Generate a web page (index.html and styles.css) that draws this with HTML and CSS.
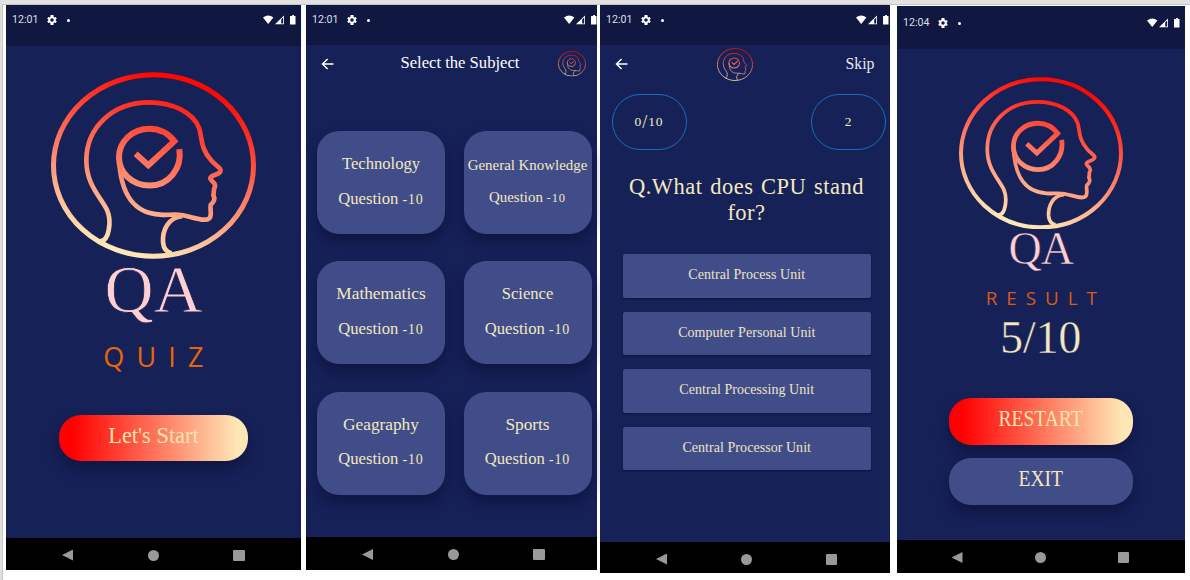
FILE: index.html
```html
<!DOCTYPE html>
<html lang="en">
<head>
<meta charset="utf-8">
<title>QA Quiz</title>
<link rel="stylesheet" href="styles.css">
</head>
<body>
<svg class="defs" aria-hidden="true">
  <defs>
    <linearGradient id="warm" gradientUnits="userSpaceOnUse" x1="430" y1="70" x2="270" y2="590">
      <stop offset="0" stop-color="#ff0800"/>
      <stop offset=".5" stop-color="#ff7861"/>
      <stop offset="1" stop-color="#ffedba"/>
    </linearGradient>
    <symbol id="logo" viewBox="34 35 615 560" preserveAspectRatio="none">
      <g fill="none" stroke="url(#warm)" stroke-linejoin="round">
        <ellipse cx="341.500" cy="315" rx="300" ry="272" stroke-width="15"/>
        <path stroke-width="14" d="M180 541C208 545 217 482 202 448C182 408 140 372 140 300C140 200 220 126 328 126C400 126 460 157 478 202C489 234 480 260 515 300C530 317 547 324 542 333C536 344 510 344 512 354C514 364 529 366 526 378C520 388 524 396 521 403C528 417 522 424 513 433C510 448 519 464 508 474C495 484 460 470 430 464C400 459 384 465 362 462C286 458 242 408 238 290"/>
        <path stroke-width="14" d="M428 467C385 470 368 510 370 545Q373 574 396 578"/>
        <path stroke-width="18" stroke-linejoin="miter" d="M288 280L326 314L404 242C382 214 357 205 330 205C278 205 238 243 238 290C238 337 278 375 330 375C387 375 428 324 419 266"/>
      </g>
    </symbol>
    <symbol id="gear" viewBox="2 2 20 20"><path fill="#fff" d="M19.400 13a7.500 7.500 0 0 0 0-2l2.100-1.600-2-3.500-2.500 1a7.300 7.300 0 0 0-1.700-1L14.900 2H9.100l-.4 3.900a7.300 7.300 0 0 0-1.700 1l-2.500-1-2 3.500L4.600 11a7.500 7.500 0 0 0 0 2l-2.100 1.600 2 3.500 2.500-1a7.300 7.300 0 0 0 1.700 1l.4 3.900h5.800l.4-3.900a7.300 7.300 0 0 0 1.700-1l2.500 1 2-3.500zM12 15.500a3.500 3.500 0 1 1 0-7 3.500 3.500 0 0 1 0 7z"/></symbol>
    <symbol id="signals" viewBox="0 0 33 10">
      <path fill="#fff" d="M0 2.600Q5.200-1.600 10.400 2.600L5.200 9z"/>
      <path fill="#fff" fill-rule="evenodd" d="M12 9.300L21 .4V9.300zM18.200 4.600V8.500H20.200V2.500z"/>
      <path fill="#fff" d="M28.300 .9H29.200V0H31V.9H32.500V9.500H27V1.500Q27 .9 27.600 .9z"/>
    </symbol>
    <symbol id="back" viewBox="0 0 13 12"><path fill="none" stroke="#fff" stroke-width="1.500" d="M12.500 6H1.500M6.600 1L1.500 6L6.600 11"/></symbol>
  </defs>
</svg>
<div class="board">

  <section class="phone home">
    <div class="status"><span class="clock">12:01</span><svg class="gear"><use href="#gear"/></svg><i class="dot"></i><svg class="signals"><use href="#signals"/></svg></div>
    <main class="stack">
      <svg class="logo-large"><use href="#logo"/></svg>
      <div class="brand">QA</div>
      <div class="quiz">QUIZ</div>
      <div class="button warm"><span>Let's Start</span></div>
    </main>
    <nav class="nav"><i class="tri"></i><i class="circle"></i><i class="square"></i></nav>
  </section>

  <section class="phone subjects">
    <div class="status"><span class="clock">12:01</span><svg class="gear"><use href="#gear"/></svg><i class="dot"></i><svg class="signals"><use href="#signals"/></svg></div>
    <main>
      <header class="bar"><svg class="back"><use href="#back"/></svg><h1>Select the Subject</h1><svg class="logo-bar"><use href="#logo"/></svg></header>
      <div class="cards">
        <div class="card"><b>Technology</b><p>Question <span>-10</span></p></div>
        <div class="card small"><b>General Knowledge</b><p>Question <span>-10</span></p></div>
        <div class="card"><b class="wide">Mathematics</b><p>Question <span>-10</span></p></div>
        <div class="card"><b>Science</b><p>Question <span>-10</span></p></div>
        <div class="card"><b class="wide">Geagraphy</b><p>Question <span>-10</span></p></div>
        <div class="card"><b class="wide">Sports</b><p>Question <span>-10</span></p></div>
      </div>
    </main>
    <nav class="nav"><i class="tri"></i><i class="circle"></i><i class="square"></i></nav>
  </section>

  <section class="phone question">
    <div class="status"><span class="clock">12:01</span><svg class="gear"><use href="#gear"/></svg><i class="dot"></i><svg class="signals"><use href="#signals"/></svg></div>
    <main>
      <header class="bar"><svg class="back"><use href="#back"/></svg><svg class="logo-mid"><use href="#logo"/></svg><span class="skip">Skip</span></header>
      <div class="pills"><div class="pill">0<span>/</span>10</div><div class="pill">2</div></div>
      <h2>Q.What does CPU stand<br>for?</h2>
      <div class="options">
        <div class="option">Central Process Unit</div>
        <div class="option">Computer Personal Unit</div>
        <div class="option">Central Processing Unit</div>
        <div class="option">Central Processor Unit</div>
      </div>
    </main>
    <nav class="nav"><i class="tri"></i><i class="circle"></i><i class="square"></i></nav>
  </section>

  <section class="phone result">
    <div class="status"><span class="clock">12:04</span><svg class="gear"><use href="#gear"/></svg><i class="dot"></i><svg class="signals"><use href="#signals"/></svg></div>
    <main class="stack">
      <svg class="logo-large"><use href="#logo"/></svg>
      <div class="brand">QA</div>
      <div class="label">RESULT</div>
      <div class="score">5/10</div>
      <div class="button warm"><span>RESTART</span></div>
      <div class="button plain"><span>EXIT</span></div>
    </main>
    <nav class="nav"><i class="tri"></i><i class="circle"></i><i class="square"></i></nav>
  </section>

</div>
</body>
</html>
```
FILE: styles.css
```css
* { box-sizing: border-box; }
body {
  margin: 0;
  height: 580px;
  overflow: hidden;
  background: #fff;
  font-family: "Liberation Serif", serif;
  color: #f3e8bf;
}
svg { display: block; flex: none; }
h1, h2, p { margin: 0; font-weight: 400; }
.defs { position: absolute; width: 0; height: 0; }
.board {
  display: flex;
  align-items: flex-start;
  height: 580px;
  border-top: 4px solid #e2e2e2;
  border-left: 2px solid #dedede;
  box-shadow: inset 1px 1px #c6c6c6;
}

.phone {
  display: flex;
  flex-direction: column;
  flex: none;
  margin-top: 1px;
  background: #162158;
}
.home { width: 295px; height: 565px; margin-left: 4px; }
.subjects { width: 290.5px; height: 565px; margin-left: 5px; }
.question { width: 290px; height: 568px; margin-left: 3.5px; }
.result { width: 287.5px; height: 567px; margin: 2px 0 0 7px; }
.phone main { flex: 1; min-height: 0; }

.status {
  display: flex;
  align-items: center;
  flex: none;
  height: 41px;
  padding: 0 5px 11px 6px;
  background: #101841;
}
.subjects .status { height: 40px; padding-right: 0; padding-bottom: 10px; }
.question .status { height: 40px; padding-right: 1.500px; padding-bottom: 10px; }
.result .status { height: 43px; padding-bottom: 9px; }
.clock {
  width: 35px;
  font: 10.6px/14px Roboto, sans-serif;
  color: #dedfe6;
}
.gear { width: 10px; height: 10px; }
.dot { width: 3px; height: 3px; margin-left: 10px; border-radius: 50%; background: #fff; }
.signals { width: 33px; height: 10px; margin-left: auto; }

.nav {
  display: flex;
  align-items: center;
  gap: 74.5px;
  flex: none;
  height: 32px;
  padding: 2px 0 0 56px;
  background: #000;
}
.subjects .nav { height: 33px; }
.question .nav { height: 31px; padding-top: 3px; gap: 73.8px; }
.result .nav { height: 33px; padding-left: 54.5px; gap: 72px; }
.tri { width: 11px; height: 11px; background: #999; clip-path: polygon(0 50%, 100% 0, 100% 100%); }
.circle { width: 11px; height: 11px; border-radius: 50%; background: #999; }
.square { width: 11.5px; height: 11px; border-radius: 1px; background: #999; }

.stack { display: flex; flex-direction: column; align-items: center; }
.logo-large { width: 205px; height: 187px; margin-top: 25.5px; }
.result .logo-large { width: 164px; height: 152.5px; margin-top: 27.5px; }
.brand {
  font-size: 68px;
  line-height: 60px;
  color: #ffcfd2;
  -webkit-text-stroke: .8px #162158;
}
.result .brand {
  margin-top: -1px;
  font-size: 46px;
  line-height: 42px;
  letter-spacing: -1px;
  -webkit-text-stroke-width: .5px;
}
.quiz {
  margin-top: 23px;
  padding-left: 12px;
  font: 27px/30px "Open Sans", sans-serif;
  letter-spacing: 12.2px;
  color: #e8650a;
}
.label {
  margin-top: 15.500px;
  padding-left: 10px;
  font: 18.8px/24px "Open Sans", sans-serif;
  letter-spacing: 9px;
  color: #d85c14;
}
.score { margin-top: 3px; font-size: 45.5px; line-height: 50px; -webkit-text-stroke: .3px #162158; }

.button {
  display: flex;
  justify-content: center;
  width: 189px;
  height: 46px;
  margin-top: 43px;
  padding-bottom: 5px;
  border-radius: 22px;
  font-size: 22.4px;
  line-height: 41px;
  box-shadow: 0 8px 14px rgba(8, 12, 45, .5);
}
.warm { background: linear-gradient(90deg, #f00 7%, #fee6b5 94%); color: #ffe5ad; }
.plain { background: #414d89; }
.result .button { width: 184px; height: 46.5px; margin-top: 35.500px; font-size: 23.5px; }
.result .plain { height: 47.5px; margin-top: 13px; }
.result .button span { transform: scaleX(.83); }

.bar { display: flex; align-items: center; height: 38px; padding-left: 14.5px; }
.back { width: 13px; height: 12px; }
.bar h1 { margin-left: 67px; padding-bottom: 3px; font-size: 16.6px; color: #fff; white-space: nowrap; }
.logo-bar { width: 28px; height: 25.5px; margin-left: auto; margin-right: 11px; opacity: .95; }
.logo-mid { width: 36px; height: 33px; margin-left: 89px; margin-top: 1px; opacity: .9; }
.skip { margin-left: 93px; font-size: 15.8px; color: #e8e8f0; }

.cards {
  display: grid;
  grid-template-columns: 128px 128px;
  grid-auto-rows: 103px;
  gap: 27.4px 18.5px;
  padding: 48px 0 0 11px;
}
.card {
  padding-top: 16px;
  border-radius: 22px;
  background: #414d89;
  font-size: 16.6px;
  line-height: 34.7px;
  text-align: center;
  white-space: nowrap;
  box-shadow: 0 8px 13px rgba(8, 12, 45, .5);
}
.card b { display: block; font-weight: 400; }
.card .wide { font-size: 17.3px; }
.card p span { font-size: .84em; letter-spacing: .9px; }
.card.small { padding-top: 19.3px; font-size: 14.9px; line-height: 31.7px; }

.pills { display: flex; justify-content: space-between; padding: 11px 4px 0 11.5px; }
.pill {
  display: flex;
  align-items: center;
  justify-content: center;
  width: 75px;
  height: 56px;
  border: 1px solid #1b6cc0;
  border-radius: 29px;
  font-size: 13.5px;
  letter-spacing: .9px;
}
.pill span { font-size: 18px; }
.question h2 {
  margin-top: 24px;
  padding-left: 3px;
  font-size: 22.5px;
  line-height: 26px;
  letter-spacing: .5px;
  word-spacing: 1.5px;
  text-align: center;
  white-space: nowrap;
}
.options { display: flex; flex-direction: column; gap: 14px; padding: 28px 19px 0 22.5px; }
.option {
  height: 43.5px;
  border-radius: 2px;
  background: #414d89;
  font-size: 14px;
  line-height: 42.5px;
  letter-spacing: .05px;
  text-align: center;
  color: #eee3c2;
  box-shadow: 0 1px 2px rgba(8, 12, 45, .6);
}
```
